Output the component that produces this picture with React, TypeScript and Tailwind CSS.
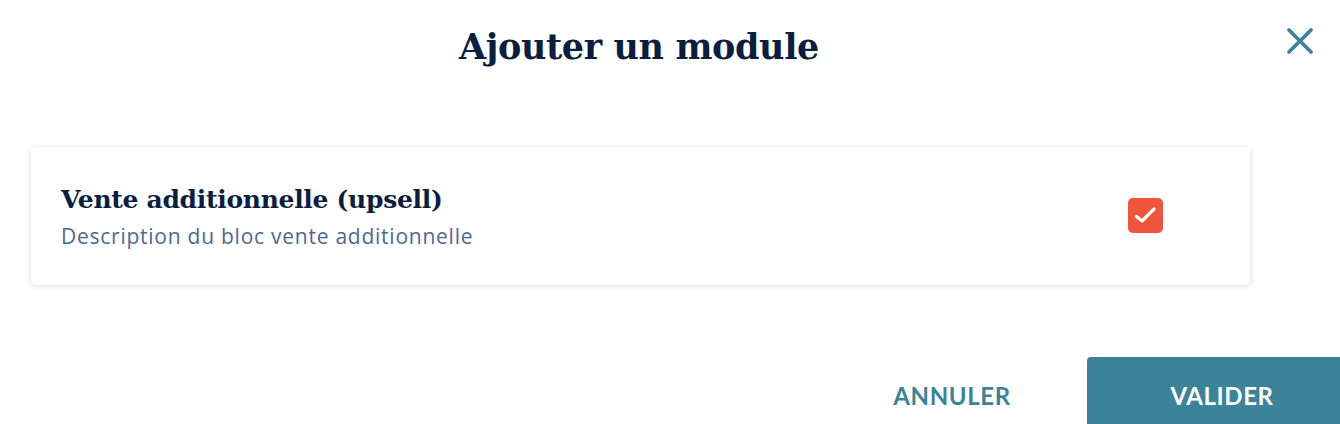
import React, { useState } from 'react';

const serif = { fontFamily: '"DejaVu Serif", "Liberation Serif", serif' };

export default function App() {
  const [checked, setChecked] = useState(true);

  return (
    <div className="w-[1340px] h-[424px] bg-white overflow-hidden relative font-['Lato',sans-serif]">
      <div className="flex">
        <h1
          className="w-[1278px] text-center pt-[21px] text-[35px] font-bold text-[#0b1e3f] tracking-[-0.4px]"
          style={serif}
        >
          Ajouter un module
        </h1>
      </div>
      <button className="absolute top-[25px] right-[24px] w-[32px] h-[32px] flex items-center justify-center text-[#3a8399]">
        <svg width="28" height="28" viewBox="0 0 28 28" fill="none" stroke="currentColor" strokeWidth="3.8" strokeLinecap="round">
          <path d="M3 3 L25 25 M25 3 L3 25" />
        </svg>
      </button>

      <div className="mt-[73px] ml-[31px] w-[1219px] h-[138px] rounded-[5px] bg-white shadow-[0_1px_6px_rgba(20,40,80,0.16)] flex items-center pl-[30px] pr-[87px]">
        <div className="flex-1 pt-[2px]">
          <div className="text-[25px] font-bold text-[#0b1e3f] leading-[30px] tracking-[-0.3px]" style={serif}>
            Vente additionnelle (upsell)
          </div>
          <div className="mt-[8px] text-[21px] text-[#4d6890] leading-[26px] tracking-[0.75px] font-['Open_Sans',sans-serif]">
            Description du bloc vente additionnelle
          </div>
        </div>
        <button
          onClick={() => setChecked(!checked)}
          className={`w-[35px] h-[35px] rounded-[5px] flex items-center justify-center ${checked ? 'bg-[#ee553a]' : 'bg-white border-2 border-gray-300'}`}
        >
          {checked && (
            <svg width="23" height="23" viewBox="0 0 23 23" fill="none" stroke="white" strokeWidth="3.2" strokeLinecap="round" strokeLinejoin="round">
              <path d="M2.5 12.5 L8 17 L20 5" />
            </svg>
          )}
        </button>
      </div>

      <div className="absolute right-[-17px] top-[357px] flex items-start">
        <button className="h-[67px] w-[200px] mr-[35px] flex items-start justify-center pt-[21px] text-[24px] font-bold text-[#3a8399] tracking-[0.6px]">
          ANNULER
        </button>
        <button className="h-[80px] w-[270px] rounded-t-[4px] bg-[#3b8399] flex items-start justify-center pt-[21px] text-[24px] font-bold text-white tracking-[0.6px]">
          VALIDER
        </button>
      </div>
    </div>
  );
}
